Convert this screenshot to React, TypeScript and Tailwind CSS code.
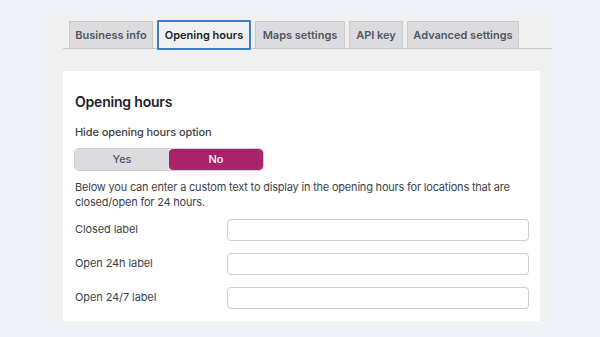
import { useState } from "react"

const tabs = [
    { name: "Business info", w: "w-[84px]" },
    { name: "Opening hours", w: "w-[94px]" },
    { name: "Maps settings", w: "w-[90px]" },
    { name: "API key", w: "w-[54px]" },
    { name: "Advanced settings", w: "w-[112px]" },
]

const Field = ({ label }: { label: string }) => (
    <div className="flex items-center h-[22px]">
        <span className="w-[152px] text-[11px] tracking-[-0.1px] text-[#3c434a]">{label}</span>
        <input className="w-[302px] h-[22px] rounded-[4px] border border-[#cfd0d2] bg-white outline-none" />
    </div>
)

export default function App() {
    const [active, setActive] = useState("Opening hours")
    const [hide, setHide] = useState(false)

    return <div className="w-full h-[337px] bg-[#f0f3f8] pt-[16px] pl-[47px] font-['Inter','Liberation_Sans',sans-serif]">
        <div className="w-[505px] h-[305px] bg-[#f0f0f1] pt-[5px] flex flex-col">
            <div className="ml-[16px] border-b border-[#c9cacc] flex gap-[4px] pl-[6px] h-[28px]">
                {tabs.map(t => t.name === active ? (
                    <button key={t.name} onClick={() => setActive(t.name)}
                        className={t.w + " shrink-0 whitespace-nowrap h-[30px] -mt-[1px] border-2 border-[#3b7fc0] bg-[#f0f0f1] text-[11px] font-semibold text-[#1d2327] rounded-[1px]"}>
                        {t.name}
                    </button>
                ) : (
                    <button key={t.name} onClick={() => setActive(t.name)}
                        className={t.w + " shrink-0 whitespace-nowrap h-[27px] border border-b-0 border-[#c9cacc] bg-[#dcdcde] text-[11px] font-semibold text-[#50575e]"}>
                        {t.name}
                    </button>
                ))}
            </div>

            <div className="ml-[16px] mt-[22px] w-[477px] flex-1 bg-white pl-[12px] pt-[22px]">
                <h2 className="text-[14px] leading-[18px] font-semibold tracking-[-0.2px] text-[#1d2327]">Opening hours</h2>
                <div className="mt-[13px] text-[11px] font-medium tracking-[-0.1px] text-[#3c434a]">Hide opening hours option</div>
                <div className="mt-[8px] flex w-[188px] h-[21px] rounded-[4px] overflow-hidden shadow-[0_0_0_1px_#d0d0d2] text-[11px] font-medium">
                    <button onClick={() => setHide(true)}
                        className={"flex-1 " + (hide ? "bg-[#a8246a] text-white rounded-[4px]" : "bg-[#dcdcde] text-[#50575e]")}>Yes</button>
                    <button onClick={() => setHide(false)}
                        className={"flex-1 " + (!hide ? "bg-[#a8246a] text-white rounded-[4px]" : "bg-[#dcdcde] text-[#50575e]")}>No</button>
                </div>
                <p className="mt-[10px] text-[11px] leading-[15px] tracking-[-0.2px] text-[#3c434a] w-[450px]">
                    Below you can enter a custom text to display in the opening hours for locations that are closed/open for 24 hours.
                </p>
                <div className="mt-[9px] flex flex-col gap-[12px]">
                    <Field label="Closed label" />
                    <Field label="Open 24h label" />
                    <Field label="Open 24/7 label" />
                </div>
            </div>
        </div>
    </div>
}
